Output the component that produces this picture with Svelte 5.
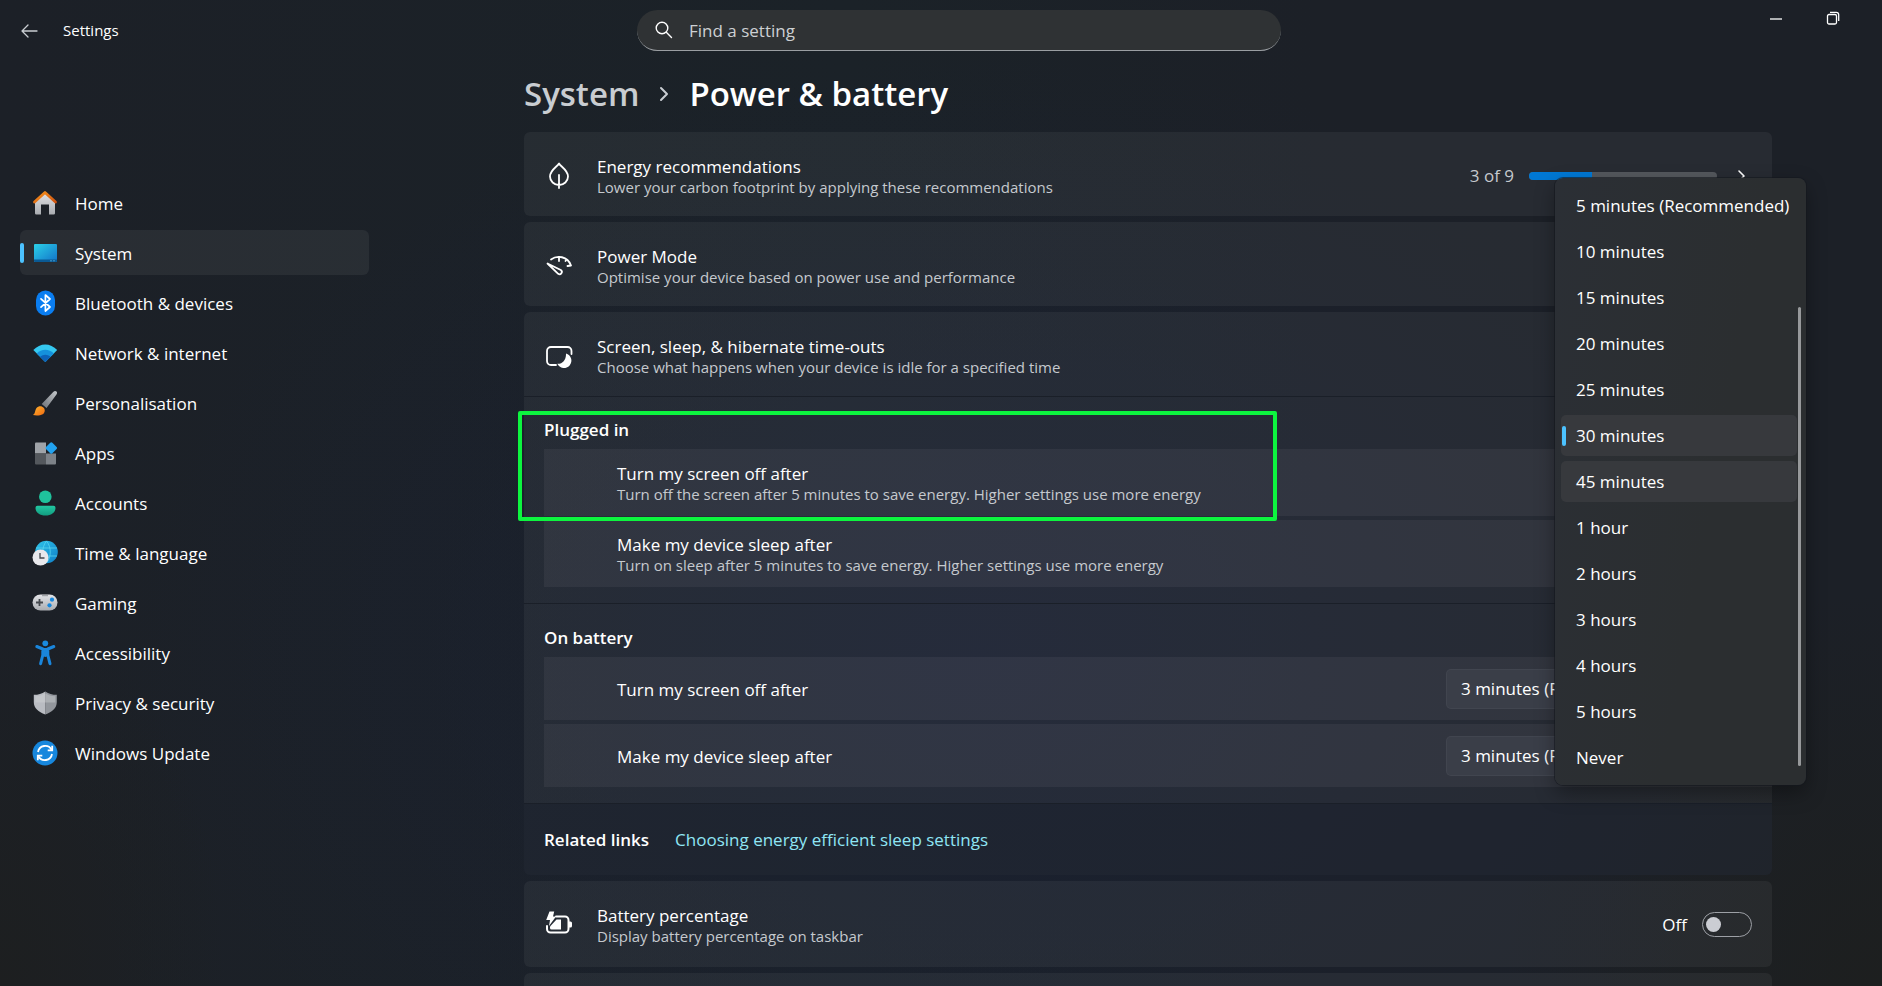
<script lang='ts'>
  const navItems = [
    { id: 'home', label: 'Home' },
    { id: 'system', label: 'System' },
    { id: 'bluetooth', label: 'Bluetooth & devices' },
    { id: 'network', label: 'Network & internet' },
    { id: 'personalisation', label: 'Personalisation' },
    { id: 'apps', label: 'Apps' },
    { id: 'accounts', label: 'Accounts' },
    { id: 'time', label: 'Time & language' },
    { id: 'gaming', label: 'Gaming' },
    { id: 'accessibility', label: 'Accessibility' },
    { id: 'privacy', label: 'Privacy & security' },
    { id: 'update', label: 'Windows Update' },
  ]

  const timeouts = [
    '5 minutes (Recommended)',
    '10 minutes',
    '15 minutes',
    '20 minutes',
    '25 minutes',
    '30 minutes',
    '45 minutes',
    '1 hour',
    '2 hours',
    '3 hours',
    '4 hours',
    '5 hours',
    'Never',
  ]
  const batteryTimeouts = ['3 minutes (Recommended)', ...timeouts.slice(1)]

  let activePage = 'system'
  let query = ''
  let selected = '30 minutes'
  let hovered = '45 minutes'
  let sleepPlugged = '30 minutes'
  let screenBattery = batteryTimeouts[0]
  let sleepBattery = batteryTimeouts[0]
  let showPercentage = false
</script>

<div class='window'>
  <header class='titlebar'>
    <div class='brand'>
      <button class='icon-button' aria-label='Back'>
        <svg width='18' height='18' viewBox='0 0 18 18' fill='none' stroke='#c9cdd2' stroke-width='1.3' stroke-linecap='round' stroke-linejoin='round'>
          <path d='M16 9H1M7 3L1 9l6 6' />
        </svg>
      </button>
      <span class='app-name'>Settings</span>
    </div>

    <label class='search'>
      <svg width='18' height='18' viewBox='0 0 18 18' fill='none' stroke='#fff' stroke-width='1.4' stroke-linecap='round'>
        <circle cx='7' cy='7' r='5.8' />
        <path d='M11.3 11.3l5.2 5.2' />
      </svg>
      <input type='text' placeholder='Find a setting' aria-label='Find a setting' bind:value={query} />
    </label>

    <div class='window-controls'>
      <button class='icon-button' aria-label='Minimise'>
        <svg width='14' height='14' viewBox='0 0 14 14' stroke='#fff' stroke-width='1.3'><path d='M1 8h12' /></svg>
      </button>
      <button class='icon-button' aria-label='Restore'>
        <svg width='14' height='14' viewBox='0 0 14 14' fill='none' stroke='#fff' stroke-width='1.3'>
          <rect x='1.5' y='3.5' width='9' height='9.5' rx='1.5' />
          <path d='M4 1.3h6.2a2.5 2.5 0 0 1 2.5 2.5V10' />
        </svg>
      </button>
    </div>
  </header>

  <div class='body'>
    <nav class='sidebar' aria-label='Settings pages'>
      {#each navItems as item}
        <button
          class='nav-item'
          class:active={activePage === item.id}
          on:click={() => (activePage = item.id)}
        >
          <svg class='nav-icon' width='26' height='26' viewBox='0 0 26 26' fill='none'>
            {#if item.id === 'home'}
              <path d='M3 11L13 2l10 9v12.200a1.300 1.300 0 0 1-1.300 1.300H17V14.500H9v10H4.300A1.300 1.300 0 0 1 3 23.200z' fill='url(#g-grey)' />
              <path d='M2.500 12L13 2.500 23.500 12' stroke='url(#g-orange)' stroke-width='2.800' stroke-linecap='round' stroke-linejoin='round' />
            {:else if item.id === 'system'}
              <rect x='2' y='4' width='23' height='18' rx='1' fill='url(#g-screen)' />
              <path d='M2 19.500h23V21a1 1 0 0 1-1 1H3a1 1 0 0 1-1-1z' fill='#0a5a94' />
              <path d='M18.500 20.800h1M21.500 20.800h1' stroke='#7fd6ff' />
            {:else if item.id === 'bluetooth'}
              <rect x='4' y='.5' width='19' height='25' rx='9.500' fill='#0a7df0' />
              <path d='M9 8.800l9 8.200-4.600 4V5L18 9l-9 8.200' stroke='#fff' stroke-width='1.700' stroke-linejoin='round' stroke-linecap='round' />
            {:else if item.id === 'network'}
              <path d='M1.300 10C8 2.500 18.500 2.500 25.200 10L13.300 22z' fill='#35c8f0' />
              <path d='M4.700 13.400c5-5 12.200-5 17.200 0L13.300 22z' fill='#1591dc' />
              <path d='M8 16.800c3.200-2.800 7.400-2.800 10.600 0L13.300 22z' fill='#0d62b8' />
            {:else if item.id === 'personalisation'}
              <path d='M24.500 1.500c1 1 .5 2.200-.2 3.200L14.500 18l-4.800-4L21.200 1.900c1-1 2.400-1.300 3.300-.4z' fill='url(#g-brush)' />
              <path d='M1 25c2.500-1.500 1.700-4.500 3.500-7 2-2.500 5.500-2.300 7.200-.3 1.800 2.200 1.200 5-1 6.500C8.200 25.600 4 25.700 1 25z' fill='url(#g-flame)' />
            {:else if item.id === 'apps'}
              <path d='M4 2.500h10v11H3v-10a1 1 0 0 1 1-1z' fill='#9fa3a8' />
              <path d='M3 13.500h11v11H4a1 1 0 0 1-1-1z' fill='#54585d' />
              <path d='M14 13.500h10v10a1 1 0 0 1-1 1h-9z' fill='#7d8288' />
              <rect x='14.800' y='3.500' width='9' height='9' rx='1.500' transform='rotate(45 19.300 8)' fill='#22a2ef' />
            {:else if item.id === 'accounts'}
              <circle cx='13.300' cy='6.800' r='6.300' fill='#1fc29c' />
              <path d='M5.500 15.800h16a2 2 0 0 1 2 2c0 5-4.500 7.700-10 7.700s-10-2.700-10-7.700a2 2 0 0 1 2-2z' fill='url(#g-teal)' />
            {:else if item.id === 'time'}
              <circle cx='14.500' cy='12' r='11.300' fill='url(#g-globe)' />
              <path d='M14.500 1c-5 6-5 16 0 22M14.500 1c5 6 5 16 0 22M4 8h21M4 16h21' stroke='#58d4ef' stroke-width='.8' />
              <circle cx='8.500' cy='17.500' r='8' fill='#e8e8ec' />
              <path d='M8 13v5h4.500' stroke='#44484e' stroke-width='1.300' />
            {:else if item.id === 'gaming'}
              <rect x='.5' y='4.500' width='25' height='16' rx='8' fill='url(#g-grey)' />
              <path d='M7.500 9v7M4 12.500h7' stroke='#44484e' stroke-width='1.800' />
              <circle cx='20' cy='9.700' r='2.100' fill='#1687dd' />
              <circle cx='17.500' cy='15.300' r='2.100' fill='#1687dd' />
              <path d='M10.500 5.700h5' stroke='#44484e' stroke-dasharray='1 1' />
            {:else if item.id === 'accessibility'}
              <circle cx='13.300' cy='3.300' r='2.900' fill='#1a8be0' />
              <path d='M4.800 6.500l6 2.500v6L8.600 23.700M21.800 6.500l-6 2.500v6l2.200 8.700' stroke='#1a86dc' stroke-width='3' stroke-linecap='round' stroke-linejoin='round' />
              <path d='M10.300 8h6v8l-3 1-3-1z' fill='#1a86dc' />
            {:else if item.id === 'privacy'}
              <path d='M13.300 1.500c3.500 2.500 7 3.300 11.500 3.300V12c0 6-4.500 10-11.500 12.500z' fill='#92969c' />
              <path d='M13.300 1.500C9.800 4 6.300 4.800 1.800 4.800V12c0 6 4.500 10 11.500 12.500z' fill='#b9bcc2' />
              <path d='M13.300 3.300c3.200 2.100 6 2.900 10 3V12.500h-20V6.300c4-.1 6.800-.9 10-3z' fill='#d2d4d8' fill-opacity='.4' />
            {:else}
              <circle cx='13' cy='13' r='12.500' fill='#1787dd' />
              <path d='M6 12a7.300 7.300 0 0 1 13.600-2.300M20 14a7.300 7.300 0 0 1-13.600 2.300' stroke='#fff' stroke-width='1.800' />
              <path d='M20.200 5.800v4.500h-4.500M5.800 20.200v-4.500h4.500' stroke='#fff' stroke-width='1.800' />
            {/if}
          </svg>
          <span>{item.label}</span>
        </button>
      {/each}
    </nav>

    <main class='page'>
      <div class='content'>
        <h1 class='breadcrumb'>
          <a href='#system'>System</a>
          <svg width='12' height='18' viewBox='0 0 12 18' fill='none' stroke='#c9cdd2' stroke-width='2' stroke-linecap='round' stroke-linejoin='round'>
            <path d='M3 3l6 6-6 6' />
          </svg>
          <span>Power &amp; battery</span>
        </h1>

        <div class='cards'>
          <section class='card'>
            <svg class='card-icon' width='28' height='28' viewBox='0 0 28 28' fill='none' stroke='#fff' stroke-width='1.8' stroke-linecap='round' stroke-linejoin='round'>
              <path d='M14 1.500c-1.500 3-9 6.500-9 13a9 8.500 0 0 0 18 0c0-6.500-7.500-10-9-13zM14 13v13' />
            </svg>
            <div class='card-text'>
              <div class='title'>Energy recommendations</div>
              <div class='description'>Lower your carbon footprint by applying these recommendations</div>
            </div>
            <div class='energy'>
              <label for='energy-progress'>3 of 9</label>
              <progress id='energy-progress' max='9' value='3'></progress>
              <svg width='12' height='18' viewBox='0 0 12 18' fill='none' stroke='#fff' stroke-width='1.6' stroke-linecap='round' stroke-linejoin='round'>
                <path d='M2 4l5 5-5 5' />
              </svg>
            </div>
          </section>

          <section class='card'>
            <svg class='card-icon' width='28' height='28' viewBox='0 0 28 28' fill='none' stroke='#fff' stroke-width='1.8' stroke-linecap='round' stroke-linejoin='round'>
              <path d='M6 7.500C12 3 22.500 4 26 13.500M14 5v4M26 13.500l-3.500.5M21.500 7.500l-1 1.500' />
              <path d='M2.500 11.500L15.800 18a2.300 2.300 0 0 1-2.600 3.800z' />
            </svg>
            <div class='card-text'>
              <div class='title'>Power Mode</div>
              <div class='description'>Optimise your device based on power use and performance</div>
            </div>
          </section>

          <section class='card-group'>
            <div class='group-head'>
              <svg class='card-icon' width='28' height='28' viewBox='0 0 28 28' fill='none'>
                <path d='M11 23H6a4 4 0 0 1-4-4V9a4 4 0 0 1 4-4h16.500a4 4 0 0 1 4 4v3' stroke='#fff' stroke-width='1.8' stroke-linecap='round' />
                <path d='M21 11.500a7.400 7.400 0 1 1-8.700 10.300c5 .5 9-4 8.700-10.300z' fill='#fff' />
              </svg>
              <div class='card-text'>
                <div class='title'>Screen, sleep, &amp; hibernate time-outs</div>
                <div class='description'>Choose what happens when your device is idle for a specified time</div>
              </div>
            </div>

            <div class='subgroup plugged'>
              <h2>Plugged in</h2>
              <div class='row tall'>
                <div class='card-text'>
                  <div class='title' id='plugged-screen'>Turn my screen off after</div>
                  <div class='description'>Turn off the screen after 5 minutes to save energy. Higher settings use more energy</div>
                </div>
                <div class='menu' role='listbox' aria-labelledby='plugged-screen'>
                  {#each timeouts as option}
                    <button
                      class='menu-item'
                      class:selected={selected === option}
                      class:hovered={hovered === option}
                      role='option'
                      aria-selected={selected === option}
                      on:click={() => (selected = option)}
                      on:mouseenter={() => (hovered = option)}
                    >{option}</button>
                  {/each}
                  <span class='scroll-thumb'></span>
                </div>
              </div>
              <div class='row tall'>
                <div class='card-text'>
                  <label class='title' for='plugged-sleep'>Make my device sleep after</label>
                  <div class='description'>Turn on sleep after 5 minutes to save energy. Higher settings use more energy</div>
                </div>
                <select id='plugged-sleep' class='short' bind:value={sleepPlugged}>
                  {#each timeouts as option}
                    <option>{option}</option>
                  {/each}
                </select>
              </div>
              <div class='highlight-frame'></div>
            </div>

            <div class='subgroup battery'>
              <h2>On battery</h2>
              <div class='row'>
                <label class='title' for='battery-screen'>Turn my screen off after</label>
                <select id='battery-screen' bind:value={screenBattery}>
                  {#each batteryTimeouts as option}
                    <option>{option}</option>
                  {/each}
                </select>
              </div>
              <div class='row'>
                <label class='title' for='battery-sleep'>Make my device sleep after</label>
                <select id='battery-sleep' bind:value={sleepBattery}>
                  {#each batteryTimeouts as option}
                    <option>{option}</option>
                  {/each}
                </select>
              </div>
            </div>

            <div class='related'>
              <h2>Related links</h2>
              <a href='#sleep-settings'>Choosing energy efficient sleep settings</a>
            </div>
          </section>

          <section class='card battery-card'>
            <svg class='card-icon' width='28' height='28' viewBox='0 0 28 28' fill='none'>
              <path d='M11 6.500h9a3.500 3.500 0 0 1 3.500 3.500v9a3.500 3.500 0 0 1-3.500 3.500H5.500A3.500 3.500 0 0 1 2 19v-3' stroke='#fff' stroke-width='2' stroke-linecap='round' />
              <path d='M24 11.500h1.500a1.500 1.500 0 0 1 1.500 1.500v3a1.500 1.500 0 0 1-1.500 1.500H24z' fill='#fff' />
              <path d='M11.500 9.500H16v10H6.500A1.500 1.500 0 0 1 5 18v-1.500z' fill='#fff' />
              <path d='M4.500 1.500h4.700L8 6.500h3L4 16l1-6H1.200z' fill='#fff' />
            </svg>
            <div class='card-text'>
              <div class='title'>Battery percentage</div>
              <div class='description'>Display battery percentage on taskbar</div>
            </div>
            <label class='toggle'>
              <span>{showPercentage ? 'On' : 'Off'}</span>
              <input type='checkbox' role='switch' aria-checked={showPercentage} bind:checked={showPercentage} />
            </label>
          </section>

          <section class='card' aria-label='Next setting'></section>
        </div>
      </div>
    </main>
  </div>
</div>

<svg class='defs' width='0' height='0' aria-hidden='true'>
  <defs>
    <linearGradient id='g-grey' x1='0' y1='0' x2='0' y2='1'>
      <stop offset='0' stop-color='#e3e4e7' /><stop offset='1' stop-color='#a9acb1' />
    </linearGradient>
    <linearGradient id='g-orange' x1='0' y1='0' x2='1' y2='1'>
      <stop offset='0' stop-color='#f7941d' /><stop offset='1' stop-color='#cf5310' />
    </linearGradient>
    <linearGradient id='g-screen' x1='0' y1='0' x2='1' y2='1'>
      <stop offset='0' stop-color='#2bd0e8' /><stop offset='1' stop-color='#1272c8' />
    </linearGradient>
    <linearGradient id='g-brush' x1='1' y1='0' x2='0' y2='1'>
      <stop offset='0' stop-color='#c3c6ca' /><stop offset='1' stop-color='#6b7076' />
    </linearGradient>
    <linearGradient id='g-flame' x1='0' y1='0' x2='1' y2='1'>
      <stop offset='0' stop-color='#ffb52e' /><stop offset='1' stop-color='#f06a12' />
    </linearGradient>
    <linearGradient id='g-teal' x1='0' y1='0' x2='0' y2='1'>
      <stop offset='0' stop-color='#22c8a2' /><stop offset='1' stop-color='#129c80' />
    </linearGradient>
    <linearGradient id='g-globe' x1='0' y1='0' x2='1' y2='1'>
      <stop offset='0' stop-color='#2fc4ea' /><stop offset='1' stop-color='#0f7fc8' />
    </linearGradient>
  </defs>
</svg>

<style>
  :global(body) {
    margin: 0;
    background: #1c2027;
  }

  .window {
    --text: #ffffff;
    --text-soft: #c5c9ce;
    --surface: rgba(255, 255, 255, 0.05);
    --edge: #1a1f28;

    display: flex;
    flex-direction: column;
    height: 100vh;
    overflow: hidden;
    color: var(--text);
    font-family: 'Open Sans', 'Noto Sans', sans-serif;
    font-size: 17px;
    line-height: 21px;
    background:
      radial-gradient(ellipse 20% 40% at 100% 100%, #1d1f1f, transparent),
      radial-gradient(ellipse 12% 40% at 0 100%, #1d1f20, transparent),
      radial-gradient(ellipse 45% 60% at 52% 66%, rgba(26, 32, 50, 0.9), transparent),
      linear-gradient(90deg, #1c2027, #1b2228 45%, #1c2027 70%);
  }

  button,
  input,
  select {
    font: inherit;
    color: inherit;
  }

  button {
    border: none;
    background: none;
    cursor: pointer;
  }

  h1,
  h2 {
    margin: 0;
  }

  a {
    text-decoration: none;
  }

  .defs {
    display: block;
  }

  .titlebar {
    display: flex;
    flex-shrink: 0;
    height: 61px;
  }

  .brand {
    display: flex;
    align-items: center;
    flex: 1 0 67px;
    gap: 15px;
    box-sizing: border-box;
    padding-left: 12px;
    min-width: 0;
  }

  .icon-button {
    display: flex;
    align-items: center;
    justify-content: center;
    width: 36px;
    height: 36px;
    padding: 0;
  }

  .app-name {
    font-size: 15px;
  }

  .search {
    display: flex;
    align-items: center;
    gap: 16px;
    flex: 0 1 644px;
    box-sizing: border-box;
    height: 41px;
    margin-top: 10px;
    padding: 0 18px;
    border-radius: 21px;
    border-bottom: 1px solid #9a9ea2;
    background: #2f3234;
  }

  .search input {
    flex: 1;
    min-width: 0;
    padding: 0;
    border: none;
    outline: none;
    background: none;
  }

  .search input::placeholder {
    color: #cdd0d3;
    opacity: 1;
  }

  .window-controls {
    display: flex;
    flex: 1 0 31px;
    box-sizing: border-box;
    justify-content: flex-end;
    gap: 21px;
    padding-right: 31px;
  }

  .body {
    display: flex;
    flex: 1;
    min-height: 0;
  }

  .sidebar {
    display: flex;
    flex-direction: column;
    flex: 0 0 414px;
    gap: 5px;
    box-sizing: border-box;
    padding: 119px 45px 0 20px;
  }

  .nav-item {
    position: relative;
    display: flex;
    align-items: center;
    gap: 17px;
    height: 45px;
    padding: 0 12px;
    border-radius: 6px;
    text-align: left;
  }

  .nav-item span {
    padding-top: 2px;
  }

  .nav-item:hover,
  .nav-item.active {
    background: rgba(255, 255, 255, 0.06);
  }

  .nav-item.active::before {
    content: '';
    position: absolute;
    left: 0;
    top: 13px;
    width: 4px;
    height: 20px;
    border-radius: 2px;
    background: #4cc2ff;
  }

  .page {
    flex: 1;
    min-width: 0;
  }

  .content {
    max-width: 1248px;
    margin: 0 auto;
  }

  .breadcrumb {
    display: flex;
    align-items: center;
    gap: 19px;
    height: 71px;
    box-sizing: border-box;
    padding-bottom: 5px;
    font-size: 33px;
    font-weight: 600;
    line-height: 44px;
  }

  .breadcrumb a {
    color: #c9cdd1;
  }

  .cards {
    display: flex;
    flex-direction: column;
    gap: 6px;
  }

  .card,
  .group-head {
    display: flex;
    align-items: center;
    box-sizing: border-box;
    height: 84px;
    padding: 3px 20px 0 21px;
  }

  .card,
  .card-group {
    border-radius: 6px;
    background: var(--surface);
  }

  .battery-card {
    height: 86px;
    padding-top: 0;
  }

  .card-icon {
    flex-shrink: 0;
    margin-right: 24px;
  }

  .card-text {
    flex: 1;
    min-width: 0;
    display: flex;
    flex-direction: column;
    padding-top: 3px;
  }

  .description {
    color: var(--text-soft);
    font-size: 15px;
  }

  .energy {
    display: flex;
    align-items: center;
    gap: 15px;
    padding-right: 3px;
    color: var(--text-soft);
  }

  .energy svg {
    margin-left: 5px;
  }

  progress {
    appearance: none;
    width: 188px;
    height: 8px;
    border: none;
    border-radius: 4px;
    overflow: hidden;
    background: #54585d;
  }

  progress::-webkit-progress-bar {
    background: #54585d;
  }

  progress::-webkit-progress-value {
    background: #0078d4;
  }

  h2 {
    font-size: 17px;
    font-weight: 600;
    line-height: 21px;
  }

  .subgroup {
    position: relative;
    display: flex;
    flex-direction: column;
    gap: 4px;
    padding: 0 0 16px 20px;
    border-top: 1px solid var(--edge);
  }

  .subgroup h2 {
    padding: 22px 0 5px;
  }

  .battery h2 {
    padding-top: 23px;
  }

  .row {
    position: relative;
    display: flex;
    align-items: center;
    box-sizing: border-box;
    height: 63px;
    padding: 0 69px 0 73px;
    background: rgba(255, 255, 255, 0.05);
  }

  .row.tall {
    height: 67px;
  }

  .row > label {
    flex: 1;
    padding-top: 2px;
  }

  select {
    appearance: none;
    width: 257px;
    height: 40px;
    padding: 0 14px;
    border: 1px solid rgba(255, 255, 255, 0.04);
    border-radius: 5px;
    background: #3a3e48;
  }

  select.short {
    width: 140px;
  }

  .highlight-frame {
    position: absolute;
    top: 14px;
    left: -6px;
    box-sizing: border-box;
    width: 759px;
    height: 110px;
    border: 4px solid #0df53f;
    border-radius: 2px;
    pointer-events: none;
  }

  .menu {
    position: absolute;
    z-index: 2;
    top: -271px;
    right: -34px;
    display: flex;
    flex-direction: column;
    gap: 5px;
    box-sizing: border-box;
    width: 251px;
    padding: 7px 9px 7px 6px;
    border-radius: 8px;
    background: linear-gradient(100deg, #2b2f35, #2b2e30 60%);
    box-shadow: 0 0 0 1px rgba(20, 24, 30, 0.6), 0 8px 20px rgba(0, 0, 0, 0.35);
  }

  .menu-item {
    position: relative;
    height: 41px;
    padding: 0 15px;
    border-radius: 5px;
    text-align: left;
    white-space: nowrap;
  }

  .menu-item.selected,
  .menu-item.hovered {
    background: #37393d;
  }

  .menu-item.selected::before {
    content: '';
    position: absolute;
    left: 1px;
    top: 11px;
    width: 4px;
    height: 20px;
    border-radius: 2px;
    background: #4cc2ff;
  }

  .scroll-thumb {
    position: absolute;
    top: 129px;
    right: 5px;
    bottom: 19px;
    width: 3px;
    border-radius: 2px;
    background: #97999b;
  }

  .related {
    display: flex;
    align-items: center;
    gap: 26px;
    height: 71px;
    padding-left: 20px;
    border-top: 1px solid var(--edge);
    border-radius: 0 0 6px 6px;
    background: rgba(24, 30, 42, 0.5);
  }

  .related a {
    color: #8fe6f5;
  }

  .toggle {
    display: flex;
    align-items: center;
    gap: 15px;
  }

  .toggle input {
    appearance: none;
    position: relative;
    width: 50px;
    height: 25px;
    margin: 0;
    border: 1px solid #9da0a6;
    border-radius: 13px;
    cursor: pointer;
  }

  .toggle input::before {
    content: '';
    position: absolute;
    top: 4px;
    left: 3px;
    width: 15px;
    height: 15px;
    border-radius: 50%;
    background: #cbcdd3;
  }

  .toggle input:checked::before {
    left: 30px;
  }
</style>
